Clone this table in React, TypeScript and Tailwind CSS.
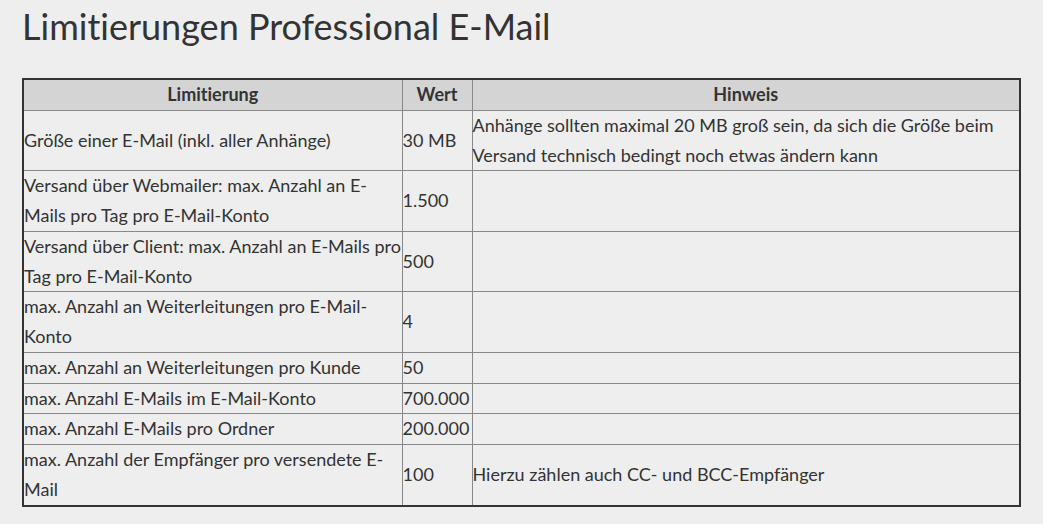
const rows: { label: string; value: string; note: string }[] = [
  {
    label: "Größe einer E-Mail (inkl. aller Anhänge)",
    value: "30 MB",
    note: "Anhänge sollten maximal 20 MB groß sein, da sich die Größe beim Versand technisch bedingt noch etwas ändern kann",
  },
  {
    label: "Versand über Webmailer: max. Anzahl an E-Mails pro Tag pro E-Mail-Konto",
    value: "1.500",
    note: "",
  },
  {
    label: "Versand über Client: max. Anzahl an E-Mails pro Tag pro E-Mail-Konto",
    value: "500",
    note: "",
  },
  {
    label: "max. Anzahl an Weiterleitungen pro E-Mail-Konto",
    value: "4",
    note: "",
  },
  { label: "max. Anzahl an Weiterleitungen pro Kunde", value: "50", note: "" },
  { label: "max. Anzahl E-Mails im E-Mail-Konto", value: "700.000", note: "" },
  { label: "max. Anzahl E-Mails pro Ordner", value: "200.000", note: "" },
  {
    label: "max. Anzahl der Empfänger pro versendete E-Mail",
    value: "100",
    note: "Hierzu zählen auch CC- und BCC-Empfänger",
  },
];

export default function App() {
  return (
    <div className="min-h-[524px] w-full bg-[#eeeeee] px-[22px] pt-[4px] font-['Lato',sans-serif] text-[#333333] [font-variant-ligatures:none]">
      <h1 className="text-[36px] font-normal leading-[44px] text-[#333333]">
        Limitierungen Professional E-Mail
      </h1>

      <table className="mt-[30px] w-[999px] table-fixed border-collapse border-2 border-[#333333] text-[18px] leading-[29.75px]">
        <colgroup>
          <col className="w-[379px]" />
          <col className="w-[70px]" />
          <col />
        </colgroup>
        <thead>
          <tr className="bg-[#d4d4d4]">
            <th className="h-[31px] border border-[#888888] p-0 text-center font-bold">Limitierung</th>
            <th className="h-[31px] border border-[#888888] p-0 text-center font-bold">Wert</th>
            <th className="h-[31px] border border-[#888888] p-0 text-center font-bold">Hinweis</th>
          </tr>
        </thead>
        <tbody>
          {rows.map((row) => (
            <tr key={row.label}>
              <td className="border border-[#888888] p-0 align-middle">{row.label}</td>
              <td className="border border-[#888888] p-0 align-middle">{row.value}</td>
              <td className="border border-[#888888] p-0 align-middle">{row.note}</td>
            </tr>
          ))}
        </tbody>
      </table>
    </div>
  );
}
